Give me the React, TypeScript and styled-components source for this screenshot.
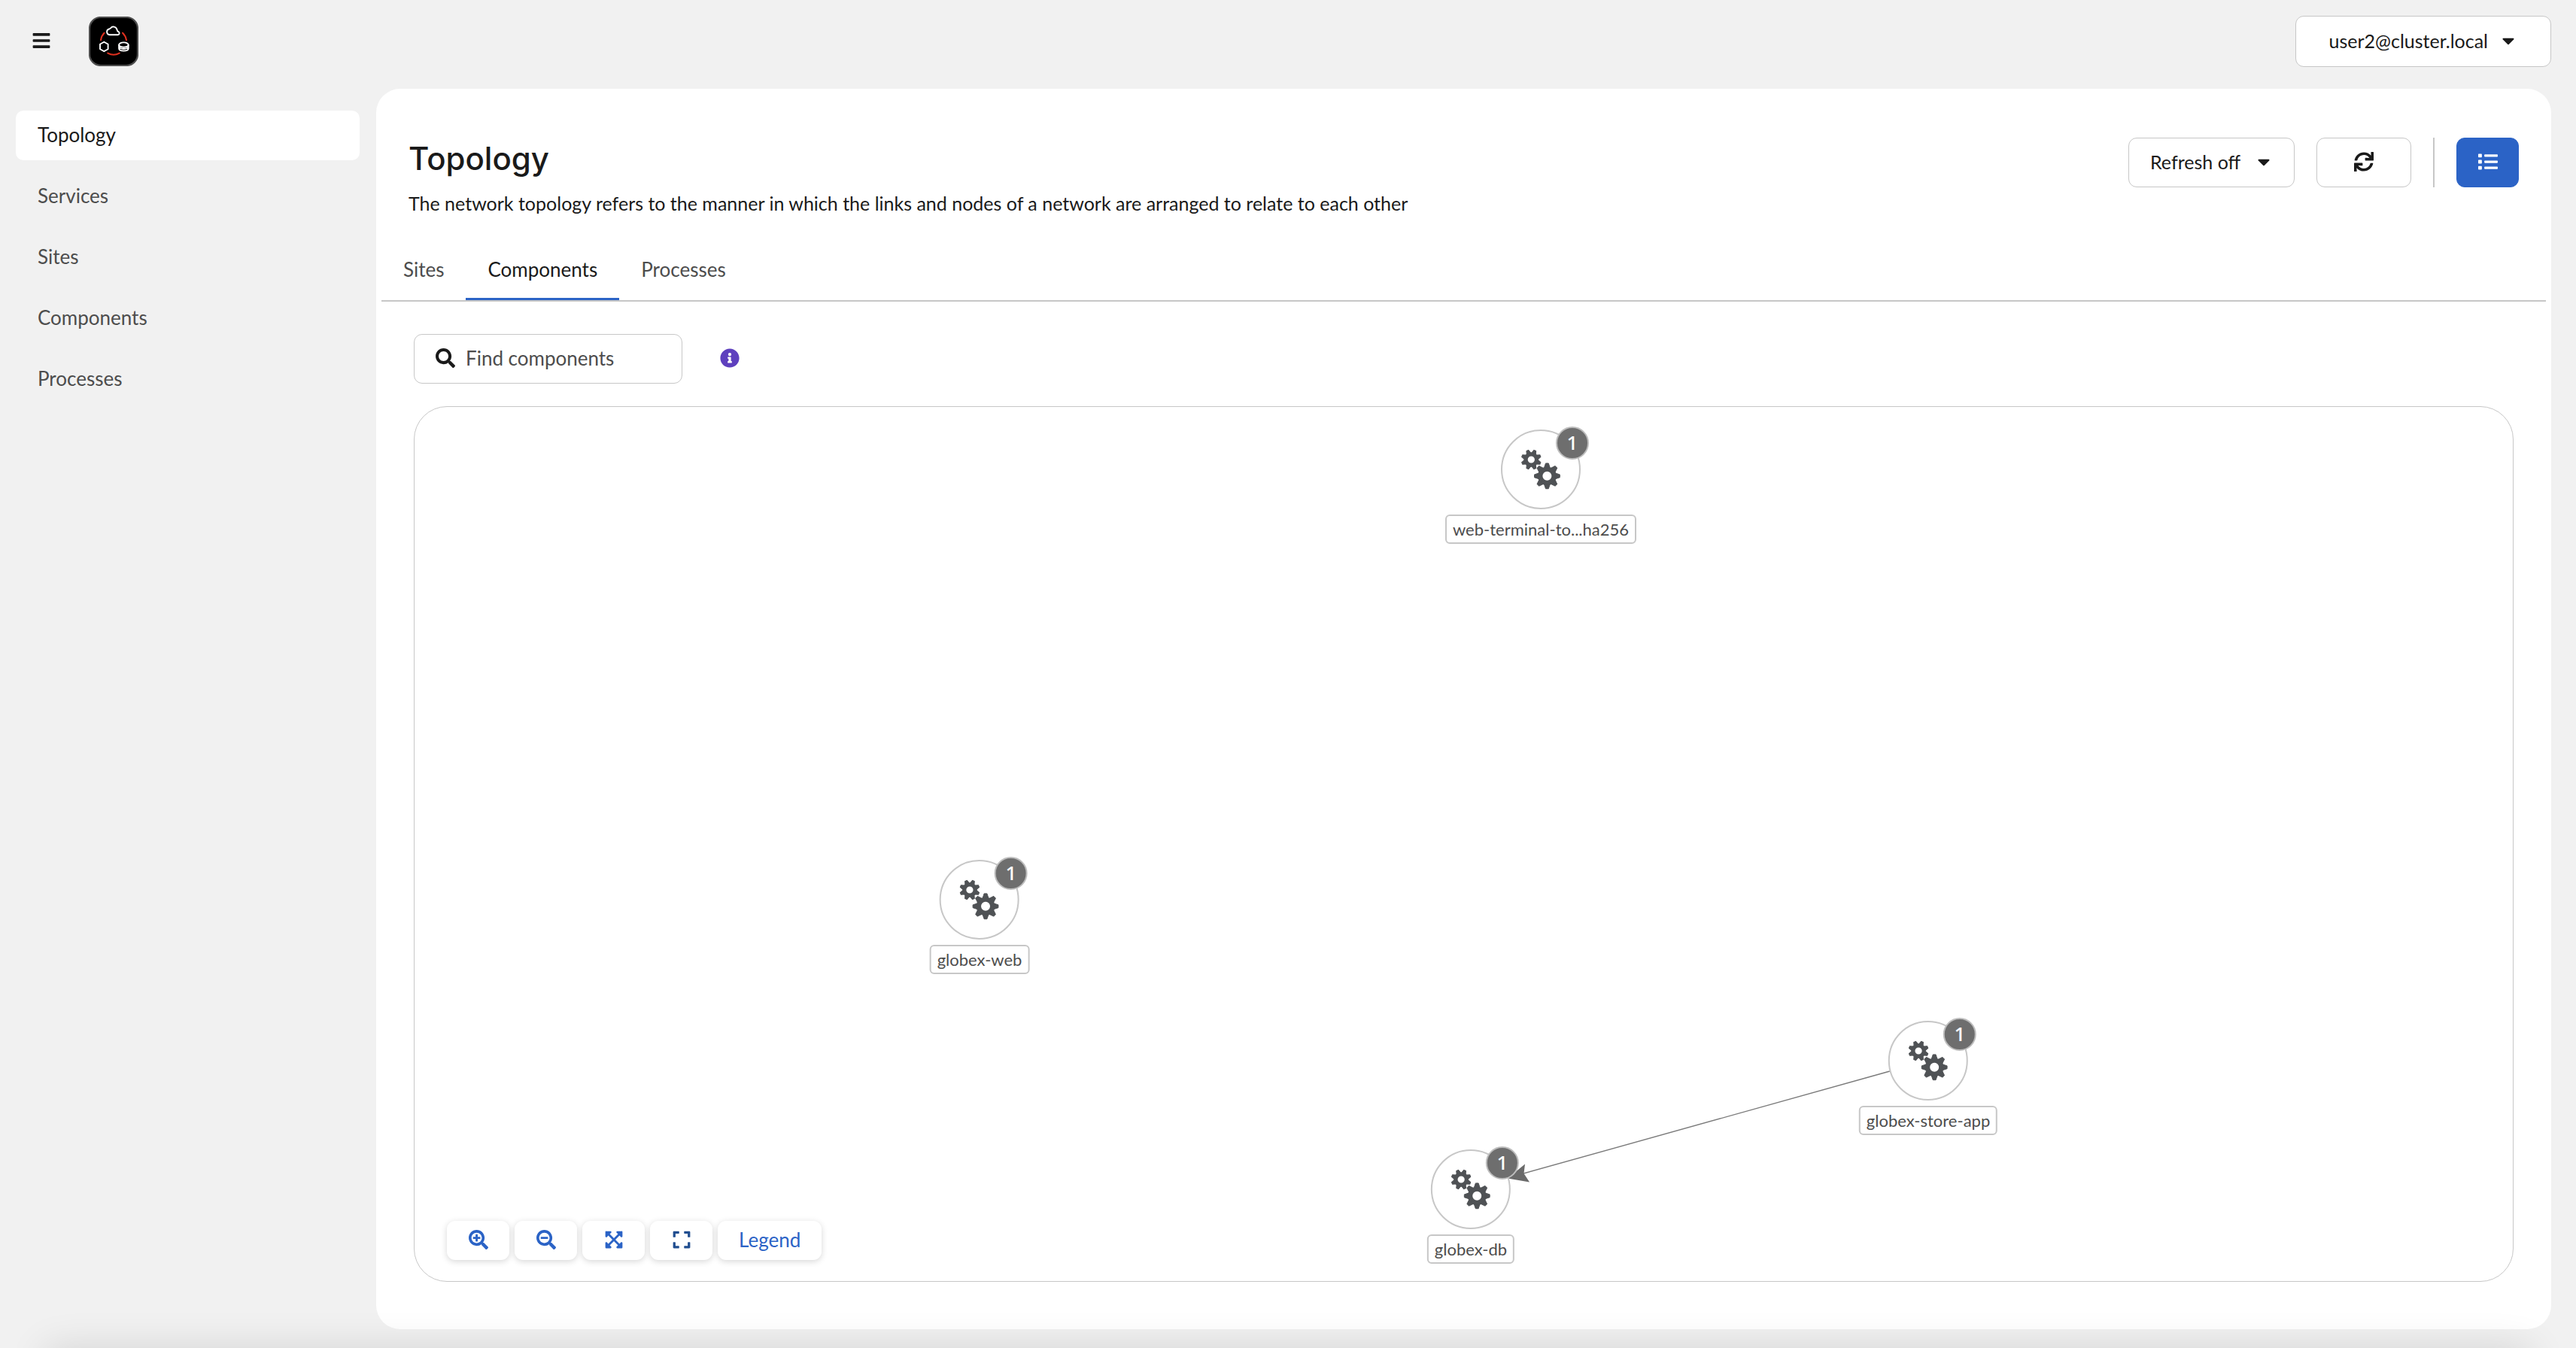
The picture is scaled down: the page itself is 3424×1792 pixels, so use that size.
import React from 'react';
import styled, { createGlobalStyle, css } from 'styled-components';
import {
  FaBars,
  FaCaretDown,
  FaExpand,
  FaExpandArrowsAlt,
  FaInfoCircle,
  FaList,
  FaSearch,
  FaSearchMinus,
  FaSearchPlus,
  FaSync,
} from 'react-icons/fa';

const color = {
  page: '#f1f1f1',
  surface: '#ffffff',
  text: '#1a1a1a',
  subtle: '#4d4d4d',
  border: '#c7c7c7',
  brand: '#2b63c6',
  brandDark: '#204d8f',
  info: '#5e40be',
  badge: '#6e6e6e',
};

const GlobalStyle = createGlobalStyle`
  *, *::before, *::after { box-sizing: border-box; }
  body {
    margin: 0;
    background: ${color.page};
    color: ${color.text};
    font-family: Lato, "Open Sans", sans-serif;
    font-size: 25px;
  }
  button, input, select { font: inherit; color: inherit; }
  button { cursor: pointer; }
`;

const Page = styled.div`
  display: flex;
  flex-direction: column;
  min-height: 100vh;
`;

/* Soft shadow rising from the bottom edge of the window. */
const BottomShade = styled.div`
  position: fixed;
  top: 100%;
  left: 60px;
  right: 60px;
  height: 100px;
  box-shadow: 0 0 52px rgba(0, 0, 0, 0.12);
  pointer-events: none;
`;

const Header = styled.header`
  display: flex;
  align-items: center;
  gap: 50px;
  padding: 21px 33px 29px 42px;
`;

const MenuButton = styled.button`
  display: flex;
  padding: 0 0 2px;
  border: 0;
  background: none;
  font-size: 26px;
`;

const Brand = styled.a`
  display: flex;
`;

const outlined = css`
  height: 66px;
  border: 1px solid ${color.border};
  border-radius: 11px;
  background: ${color.surface};
`;

const UserButton = styled.button`
  ${outlined}
  display: flex;
  align-items: center;
  gap: 14px;
  height: 68px;
  margin-left: auto;
  padding: 0 43px 3px;
`;

const Body = styled.div`
  display: flex;
  flex: 1;
  gap: 22px;
  padding: 0 33px 25px 21px;
`;

const Sidebar = styled.nav`
  flex: none;
  width: 457px;
  padding-top: 29px;
`;

const NavList = styled.ul`
  display: flex;
  flex-direction: column;
  gap: 15px;
  margin: 0;
  padding: 0;
  list-style: none;
`;

const NavLink = styled.a<{ $active?: boolean }>`
  display: block;
  padding: 0 29px 2px;
  border-radius: 10px;
  background: ${(p) => (p.$active ? color.surface : 'transparent')};
  color: ${(p) => (p.$active ? color.text : color.subtle)};
  font-size: 26px;
  line-height: 64px;
  text-decoration: none;
`;

const Main = styled.main`
  display: flex;
  flex: 1;
  flex-direction: column;
  min-width: 0;
  padding: 65px 7px 63px;
  border-radius: 32px;
  background: ${color.surface};
`;

const TitleBar = styled.div`
  display: flex;
  align-items: flex-start;
  justify-content: space-between;
  padding: 0 36px;
`;

const Title = styled.h1`
  margin: 0;
  font-family: Inter, sans-serif;
  font-size: 42px;
  font-weight: 500;
  line-height: 56px;
`;

const Description = styled.p`
  margin: 12px 0 0;
  line-height: 38px;
`;

const Actions = styled.div`
  display: flex;
  gap: 29px;
`;

const SelectBox = styled.div`
  display: grid;
  align-items: center;
  width: 221px;

  > * { grid-area: 1 / 1; }

  svg {
    justify-self: end;
    margin: 0 28px 3px 0;
    font-size: 26px;
    pointer-events: none;
  }
`;

const Select = styled.select`
  ${outlined}
  width: 100%;
  padding: 0 28px 3px;
  appearance: none;
`;

const IconButton = styled.button<{ $primary?: boolean }>`
  ${outlined}
  display: flex;
  align-items: center;
  justify-content: center;
  width: 126px;
  padding: 0 0 3px;
  font-size: 26px;
  ${(p) =>
    p.$primary &&
    css`
      width: 83px;
      border-color: ${color.brand};
      background: ${color.brand};
      color: ${color.surface};
    `}
`;

const Divider = styled.div`
  width: 2px;
  background: ${color.border};
`;

const Tabs = styled.div`
  display: flex;
  margin-top: 31px;
  border-bottom: 2px solid ${color.border};
`;

const Tab = styled.button<{ $active?: boolean }>`
  padding: 18px 29px;
  border: 0;
  border-bottom: 3px solid ${(p) => (p.$active ? color.brand : 'transparent')};
  background: none;
  color: ${(p) => (p.$active ? color.text : color.subtle)};
  font-size: 26px;
  line-height: 40px;
`;

const Filters = styled.div`
  display: flex;
  align-items: center;
  gap: 50px;
  padding: 43px 43px 30px;
`;

const SearchBox = styled.label`
  ${outlined}
  display: flex;
  align-items: center;
  gap: 14px;
  width: 357px;
  padding: 0 28px 2px;

  svg { flex: none; font-size: 26px; }
`;

const SearchInput = styled.input`
  flex: 1;
  min-width: 0;
  padding: 0;
  border: 0;
  outline: 0;
  background: none;
  font-size: 26px;

  &::placeholder { color: ${color.subtle}; opacity: 1; }
`;

const InfoButton = styled.button`
  display: flex;
  padding: 0 0 3px;
  border: 0;
  background: none;
  color: ${color.info};
  font-size: 26px;
`;

const Canvas = styled.section`
  position: relative;
  flex: 1;
  min-height: 1160px;
  margin: 0 43px;
  border: 1px solid ${color.border};
  border-radius: 44px;
  overflow: hidden;
`;

const EdgeLayer = styled.svg`
  position: absolute;
  inset: 0;
  width: 100%;
  height: 100%;
`;

const NodeBox = styled.div<{ $x: number; $y: number }>`
  position: absolute;
  top: ${(p) => p.$y - 53}px;
  left: ${(p) => p.$x}px;
  display: flex;
  flex-direction: column;
  align-items: center;
  gap: 7px;
  transform: translateX(-50%);
`;

const NodeCircle = styled.div`
  position: relative;
  display: flex;
  width: 106px;
  height: 106px;
  border: 2px solid ${color.border};
  border-radius: 50%;
  background: ${color.surface};

  svg { width: 102px; height: 102px; }
`;

const NodeBadge = styled.span`
  position: absolute;
  top: -6px;
  left: 71px;
  width: 44px;
  height: 44px;
  border: 2px solid #bdbdbd;
  border-radius: 50%;
  background: ${color.badge};
  color: ${color.surface};
  font-family: "Noto Sans", sans-serif;
  font-size: 26px;
  font-weight: 500;
  line-height: 38px;
  text-align: center;
`;

const NodeLabel = styled.span`
  padding: 0 8px;
  border: 2px solid ${color.border};
  border-radius: 6px;
  background: ${color.surface};
  color: ${color.subtle};
  font-size: 22px;
  line-height: 35px;
  white-space: nowrap;
`;

const Controls = styled.div`
  position: absolute;
  bottom: 28px;
  left: 43px;
  display: flex;
  gap: 7px;
`;

const ControlButton = styled.button<{ $dark?: boolean }>`
  display: flex;
  align-items: center;
  justify-content: center;
  min-width: 83px;
  height: 52px;
  padding: 0 28px 3px;
  border: 0;
  border-radius: 11px;
  background: ${color.surface};
  box-shadow: 0 2px 8px rgba(0, 0, 0, 0.16);
  color: ${(p) => (p.$dark ? color.brandDark : color.brand)};
  font-size: 26px;
`;

function Logo() {
  return (
    <svg width="66" height="66" viewBox="8 7 66 66" fill="none" aria-hidden="true">
      <rect x="9" y="8" width="64" height="64" rx="15" fill="#000" stroke="#4d4d4d" strokeWidth="2.2" />
      <g stroke="#e0301e" strokeWidth="2" strokeLinecap="round">
        <path d="M24 38.3a17.4 17.4 0 0 1 4.6-9.5" />
        <path d="M53 28.8a17.4 17.4 0 0 1 5 9.5" />
        <path d="M33.2 55.6q7.8 4.2 15.6 0" />
      </g>
      <g stroke="#fff" strokeWidth="1.9" strokeLinejoin="round">
        <path d="M35.6 31.2a3.9 3.9 0 0 1-.4-7.7 3 3 0 0 0 1.9-1.2c2.2-2.8 6.8-2 8 1.1l1 2.6a2.4 2.4 0 0 0 1.3 1.2 2.1 2.1 0 0 1-.7 4z" />
        <path d="m28.3 40.7 5.3 3.1v6.4l-5.3 3.1-5.3-3.1v-6.4z" />
        <ellipse cx="54.4" cy="44.6" rx="6.3" ry="3.2" />
        <path d="M48.1 44.6v4.6c0 4.6 12.6 4.6 12.6 0v-4.6M48.1 47.4c1.8 3.4 10.8 3.4 12.6 0" />
      </g>
    </svg>
  );
}

type GearProps = { cx: number; cy: number; outer: number; body: number; hole: number; tooth: number; turn: number };

function Gear({ cx, cy, outer, body, hole, tooth, turn }: GearProps) {
  const angles = Array.from({ length: 8 }, (_, i) => i * 45 + turn);
  return (
    <g transform={`translate(${cx} ${cy})`} fill="#4f5255" stroke="#4f5255">
      <circle r={(body + hole) / 2} strokeWidth={body - hole} fill="none" />
      {angles.map((a) => (
        <path
          key={a}
          transform={`rotate(${a})`}
          strokeWidth="1"
          strokeLinejoin="round"
          d={`M${-tooth * 0.72} ${-body + 1}L${-tooth * 0.36} ${-outer + 0.5}H${tooth * 0.36}L${tooth * 0.72} ${-body + 1}z`}
        />
      ))}
    </g>
  );
}

function CogsIcon() {
  return (
    <svg viewBox="-51 -51 102 102" aria-hidden="true">
      <Gear cx={-12.7} cy={-13} outer={13.6} body={9.8} hole={4.6} tooth={4} turn={22.5} />
      <Gear cx={8.4} cy={8.8} outer={17.4} body={12.4} hole={6} tooth={5.2} turn={0} />
    </svg>
  );
}

const nodes = [
  { name: 'web-terminal-to...ha256', x: 1497, y: 83 },
  { name: 'globex-web', x: 751, y: 655 },
  { name: 'globex-db', x: 1404, y: 1040 },
  { name: 'globex-store-app', x: 2012, y: 869 },
];

const navItems = ['Topology', 'Services', 'Sites', 'Components', 'Processes'];
const tabItems = ['Sites', 'Components', 'Processes'];

export default function App() {
  return (
    <Page>
      <GlobalStyle />
      <Header>
        <MenuButton type="button" aria-label="Toggle navigation">
          <FaBars />
        </MenuButton>
        <Brand href="#" aria-label="Home">
          <Logo />
        </Brand>
        <UserButton type="button">
          user2@cluster.local
          <FaCaretDown size={26} />
        </UserButton>
      </Header>

      <Body>
        <Sidebar aria-label="Main">
          <NavList>
            {navItems.map((item) => (
              <li key={item}>
                <NavLink href={`#${item.toLowerCase()}`} $active={item === 'Topology'}>
                  {item}
                </NavLink>
              </li>
            ))}
          </NavList>
        </Sidebar>

        <Main>
          <TitleBar>
            <div>
              <Title>Topology</Title>
              <Description>
                The network topology refers to the manner in which the links and nodes of a network are arranged to
                relate to each other
              </Description>
            </div>
            <Actions>
              <SelectBox>
                <Select aria-label="Refresh interval" defaultValue="off">
                  <option value="off">Refresh off</option>
                </Select>
                <FaCaretDown />
              </SelectBox>
              <IconButton type="button" aria-label="Refresh now">
                <FaSync />
              </IconButton>
              <Divider />
              <IconButton type="button" aria-label="Show as list" $primary>
                <FaList />
              </IconButton>
            </Actions>
          </TitleBar>

          <Tabs role="tablist">
            {tabItems.map((item) => (
              <Tab
                key={item}
                type="button"
                role="tab"
                aria-selected={item === 'Components'}
                $active={item === 'Components'}
              >
                {item}
              </Tab>
            ))}
          </Tabs>

          <Filters>
            <SearchBox>
              <FaSearch />
              <SearchInput type="text" placeholder="Find components" aria-label="Find components" />
            </SearchBox>
            <InfoButton type="button" aria-label="More information">
              <FaInfoCircle />
            </InfoButton>
          </Filters>

          <Canvas aria-label="Topology graph">
            <EdgeLayer aria-hidden="true">
              <line x1="1961" y1="883" x2="1474" y2="1019" stroke="#7a7a7a" strokeWidth="1.4" />
              <path d="M1453 1025.500L1476 1006.500L1474.500 1019L1482 1030.500z" fill="#6a6a6a" />
            </EdgeLayer>
            {nodes.map((node) => (
              <NodeBox key={node.name} $x={node.x} $y={node.y}>
                <NodeCircle>
                  <CogsIcon />
                  <NodeBadge>1</NodeBadge>
                </NodeCircle>
                <NodeLabel>{node.name}</NodeLabel>
              </NodeBox>
            ))}
            <Controls>
              <ControlButton type="button" aria-label="Zoom in">
                <FaSearchPlus />
              </ControlButton>
              <ControlButton type="button" aria-label="Zoom out">
                <FaSearchMinus />
              </ControlButton>
              <ControlButton type="button" aria-label="Fit to screen">
                <FaExpandArrowsAlt />
              </ControlButton>
              <ControlButton type="button" aria-label="Reset view" $dark>
                <FaExpand />
              </ControlButton>
              <ControlButton type="button">Legend</ControlButton>
            </Controls>
          </Canvas>
        </Main>
      </Body>
      <BottomShade />
    </Page>
  );
}
